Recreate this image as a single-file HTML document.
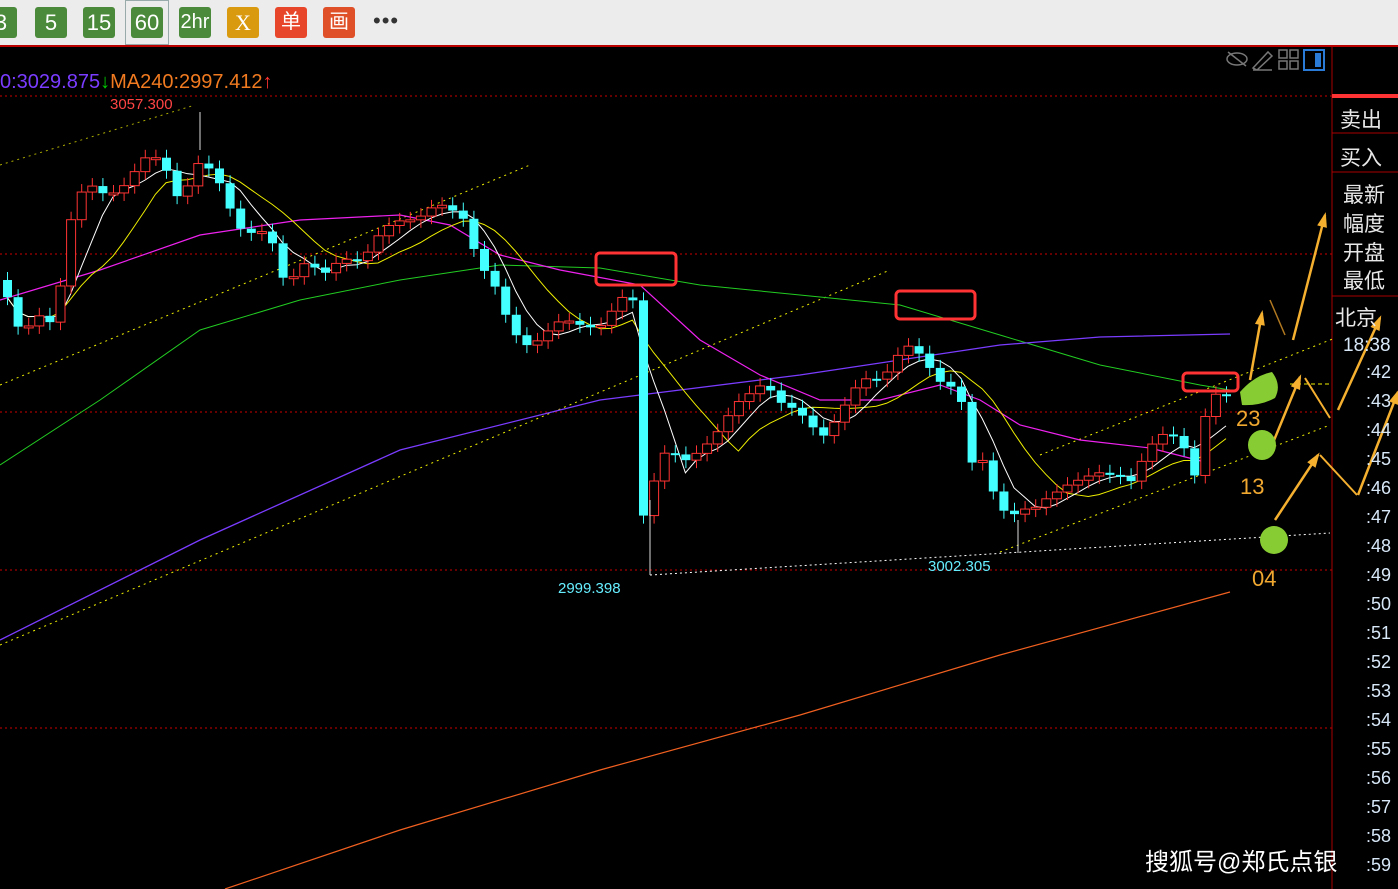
<!DOCTYPE html><html><head><meta charset="utf-8"><style>
body{margin:0;width:1398px;height:889px;overflow:hidden;background:#000;font-family:"Liberation Sans","Noto Sans CJK SC",sans-serif}
#tb{position:absolute;left:0;top:0;width:1398px;height:45px;background:#ececec;border-bottom:2px solid #b00}
.b{position:absolute;top:7px;width:32px;height:31px;border-radius:3px;color:#fff;font-size:22px;text-align:center;line-height:31px}
.g{background:#4a8a3a}
.lbl{position:absolute;color:#e8e8e8;font-size:21px;left:1343px}
.t{position:absolute;left:1366px;color:#d8e8f8;font-size:18px}
</style></head><body>
<div id="tb">
<div class="b g" style="left:-15px">3</div>
<div class="b g" style="left:35px">5</div>
<div class="b g" style="left:83px">15</div>
<div class="b g" style="left:131px">60</div>
<div style="position:absolute;left:125px;top:0;width:42px;height:43px;border:1px solid #9aa"></div>
<div class="b g" style="left:179px;font-size:20px">2hr</div>
<div class="b" style="left:227px;background:#d99a10;font-family:'Liberation Serif',serif">X</div>
<div class="b" style="left:275px;background:#e8462a;font-size:20px">单</div>
<div class="b" style="left:323px;background:#e05028;font-size:20px">画</div>
<div style="position:absolute;left:373px;top:8px;font-size:22px;color:#333;letter-spacing:1px">•••</div>
</div>
<svg id="s" width="1398" height="889" style="position:absolute;left:0;top:0"></svg>
<div style="position:absolute;left:0;top:71px;font-size:20px;color:#7a3cff">0:3029.875<span style="color:#0c0">↓</span><span style="color:#f07a20">MA240:2997.412</span><span style="color:#f33">↑</span></div>
<div style="position:absolute;left:110px;top:96px;font-size:15px;color:#f44">3057.300</div>
<div style="position:absolute;left:558px;top:580px;font-size:15px;color:#6ef">2999.398</div>
<div style="position:absolute;left:928px;top:558px;font-size:15px;color:#6ef">3002.305</div>
<div style="position:absolute;left:1236px;top:406px;font-size:22px;color:#f0a830">23</div>
<div style="position:absolute;left:1240px;top:474px;font-size:22px;color:#f0a830">13</div>
<div style="position:absolute;left:1252px;top:566px;font-size:22px;color:#f0a830">04</div>
<div class="lbl" style="left:1340px;top:104px">卖出</div>
<div class="lbl" style="left:1340px;top:142px">买入</div>
<div class="lbl" style="top:179px">最新</div>
<div class="lbl" style="top:208px">幅度</div>
<div class="lbl" style="top:237px">开盘</div>
<div class="lbl" style="top:265px">最低</div>
<div class="lbl" style="left:1335px;top:302px">北京</div>
<div class="t" style="left:1343px;top:335px;font-size:19px">18:38</div>
<div id="tl"></div>
<div style="position:absolute;left:1145px;top:842px;font-size:24px;color:#fff">搜狐号@郑氏点银</div>
<script>
var s=document.getElementById('s'),h='';
function L(p,c,w,d){h+='<polyline fill="none" stroke="'+c+'" stroke-width="'+(w||1)+'"'+(d?' stroke-dasharray="'+d+'"':'')+' points="'+p.map(function(a){return a.join(',')}).join(' ')+'"/>';}
[96,254,412,570,728].forEach(function(y){L([[0,y],[1332,y]],'#c00',1,'2,3')});
L([[1332,46],[1332,889]],'#a00',1);
L([[1332,96],[1398,96]],'#f33',4);
[133,172,296].forEach(function(y){L([[1332,y],[1398,y]],'#a00',1)});
L([[0,645],[890,270]],'#ee0',1,'2,4');L([[0,385],[530,165]],'#ee0',1,'2,4');L([[0,165],[195,105]],'#aa0',1,'2,4');
L([[1040,455],[1335,338]],'#ee0',1,'2,4');L([[1000,552],[1330,425]],'#ee0',1,'2,4');
L([[650,575],[1330,533]],'#fff',1,'2,3');L([[1290,384],[1330,384]],'#ee0',1,'4,3');
L([[0,465],[100,400],[200,330],[300,300],[400,280],[500,265],[600,268],[700,285],[800,295],[900,305],[1000,335],[1100,365],[1200,385],[1230,390]],'#2c2',1);
L([[0,640],[200,540],[400,450],[600,400],[800,375],[1000,345],[1100,337],[1230,334]],'#7a3cff',1.3);
L([[0,300],[100,270],[200,235],[300,220],[400,215],[450,225],[500,255],[560,270],[640,285],[700,340],[760,375],[820,400],[880,400],[940,385],[980,400],[1020,425],[1080,440],[1150,448],[1205,462]],'#e2e',1.2);
L([[225,889],[400,830],[600,770],[800,715],[1000,655],[1230,592]],'#f06020',1.2);
var k=[[0,280],[10,320],[20,340],[30,320],[50,320],[65,220],[80,190],[100,195],[120,180],[145,160],[160,165],[175,195],[195,165],[215,185],[240,230],[265,240],[280,280],[300,260],[320,280],[340,255],[360,255],[380,235],[400,215],[430,210],[460,215],[475,260],[490,290],[505,330],[520,340],[540,335],[560,325],[580,320],[600,325],[620,300],[634,300],[636,520],[648,480],[660,455],[680,465],[700,440],[720,425],[740,400],[760,375],[780,410],[800,420],[820,430],[840,410],[860,380],[880,370],[900,350],[920,360],[940,380],[955,390],[965,470],[980,460],[990,490],[1005,515],[1020,515],[1035,510],[1045,490],[1060,482],[1080,485],[1100,470],[1115,470],[1130,485],[1140,460],[1160,430],[1175,430],[1190,480],[1205,400],[1220,390]];
function f(x){for(var i=1;i<k.length;i++)if(x<=k[i][0]){var a=k[i-1],b=k[i];return a[1]+(b[1]-a[1])*(x-a[0])/(b[0]-a[0]);}return 390;}
var C=[],prev=f(0);
for(var x=3;x<1222;x+=10.6){var c=f(x)+Math.sin(x*0.7)*6;var o=prev;C.push([x,o,c]);prev=c;}
var m5=[],m10=[];
C.forEach(function(q,i){function av(n){var s=0,m=0;for(var j=Math.max(0,i-n+1);j<=i;j++){s+=C[j][2];m++}return s/m;}m5.push([q[0]+4,av(5)]);m10.push([q[0]+4,av(10)]);});
L(m10,'#ee0',1);L(m5,'#fff',1);
C.forEach(function(q){var x=q[0],o=q[1],c=q[2],t=Math.min(o,c),b=Math.max(o,c),hh=Math.max(b-t,2);var up=c<o;var col=up?'#f33':'#4ff';
h+='<line x1="'+(x+4.5)+'" x2="'+(x+4.5)+'" y1="'+(t-8)+'" y2="'+(b+8)+'" stroke="'+col+'"/>';
h+='<rect x="'+x+'" y="'+t+'" width="9" height="'+hh+'" '+(up?'fill="#000" stroke="#f33"':'fill="#4ff"')+'/>';});
L([[200,112],[200,150]],'#ddd',1);L([[650,500],[650,575]],'#ddd',1);L([[1018,520],[1018,553]],'#ddd',1);
[[596,253,80,32],[896,291,79,28],[1183,373,55,18]].forEach(function(r){h+='<rect x="'+r[0]+'" y="'+r[1]+'" width="'+r[2]+'" height="'+r[3]+'" rx="4" fill="none" stroke="#f33" stroke-width="3"/>'});
var ar=[[1250,380,1262,313],[1270,450,1300,377],[1275,520,1318,455],[1293,340,1325,215],[1338,410,1380,318],[1358,495,1398,392]];
ar.forEach(function(a){L([[a[0],a[1]],[a[2],a[3]]],'#f5b030',2.5);var dx=a[2]-a[0],dy=a[3]-a[1],l=Math.sqrt(dx*dx+dy*dy),ux=dx/l,uy=dy/l;h+='<polygon fill="#f5b030" points="'+(a[2]+ux*3)+','+(a[3]+uy*3)+' '+(a[2]-ux*12-uy*5)+','+(a[3]-uy*12+ux*5)+' '+(a[2]-ux*12+uy*5)+','+(a[3]-uy*12-ux*5)+'"/>';});
L([[1270,300],[1285,335]],'#b07820',1.5);L([[1305,378],[1330,418]],'#f5b030',2);L([[1320,455],[1357,495]],'#f5b030',2);
h+='<path d="M1240 392 Q1255 375 1272 372 Q1282 385 1275 398 Q1260 406 1242 405Z" fill="#8c3"/>';
h+='<ellipse cx="1262" cy="445" rx="14" ry="15" fill="#8c3"/>';
h+='<ellipse cx="1274" cy="540" rx="14" ry="14" fill="#8c3"/>';
h+='<rect x="1304" y="50" width="20" height="20" fill="none" stroke="#2a7ad8" stroke-width="2"/><rect x="1315" y="53" width="6" height="14" fill="#2a7ad8"/>';
[[1279,50],[1290,50],[1279,61],[1290,61]].forEach(function(p){h+='<rect x="'+p[0]+'" y="'+p[1]+'" width="8" height="8" fill="none" stroke="#777" stroke-width="1.5"/>'});
h+='<path d="M1253 68 L1268 52 L1272 56 L1257 70 Z M1253 70 H1272" fill="none" stroke="#777" stroke-width="1.5"/>';
h+='<ellipse cx="1237" cy="59" rx="10" ry="6" fill="none" stroke="#777" stroke-width="1.5"/><line x1="1228" y1="52" x2="1246" y2="66" stroke="#777" stroke-width="1.5"/>';
s.innerHTML=h;
var tl='';for(var i=0;i<18;i++){var n=42+i;tl+='<div class="t" style="top:'+(362+i*29)+'px">:'+(n%60<10?'0':'')+(n%60)+'</div>';}
document.getElementById('tl').innerHTML=tl;
</script>
</body></html>
